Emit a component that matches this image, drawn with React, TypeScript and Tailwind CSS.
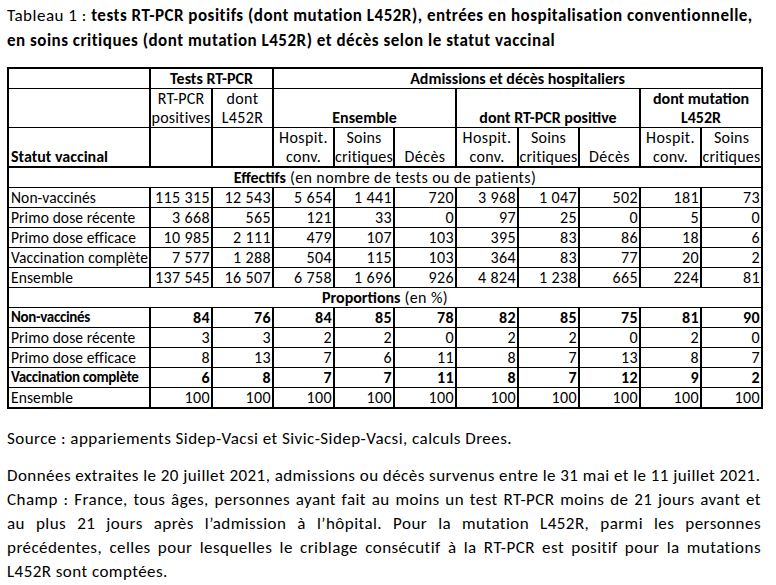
const effectifs: string[][] = [
  ['Non-vaccinés', '115 315', '12 543', '5 654', '1 441', '720', '3 968', '1 047', '502', '181', '73'],
  ['Primo dose récente', '3 668', '565', '121', '33', '0', '97', '25', '0', '5', '0'],
  ['Primo dose efficace', '10 985', '2 111', '479', '107', '103', '395', '83', '86', '18', '6'],
  ['Vaccination complète', '7 577', '1 288', '504', '115', '103', '364', '83', '77', '20', '2'],
  ['Ensemble', '137 545', '16 507', '6 758', '1 696', '926', '4 824', '1 238', '665', '224', '81'],
];

const proportions: { cells: string[]; bold?: boolean }[] = [
  { cells: ['Non-vaccinés', '84', '76', '84', '85', '78', '82', '85', '75', '81', '90'], bold: true },
  { cells: ['Primo dose récente', '3', '3', '2', '2', '0', '2', '2', '0', '2', '0'] },
  { cells: ['Primo dose efficace', '8', '13', '7', '6', '11', '8', '7', '13', '8', '7'] },
  { cells: ['Vaccination complète', '6', '8', '7', '7', '11', '8', '7', '12', '9', '2'], bold: true },
  { cells: ['Ensemble', '100', '100', '100', '100', '100', '100', '100', '100', '100', '100'] },
];

const widths = [142, 62, 61, 61, 60, 62, 62, 61, 61, 61, 61];

const cell = 'border-y border-x-2 border-black p-0 align-bottom';

const DataRow = ({ cells, bold }: { cells: string[]; bold?: boolean }) => (
  <tr className={bold ? 'font-bold' : ''}>
    {cells.map((c, i) =>
      i === 0 ? (
        <td
          key={i}
          className={`${cell} pl-[2px] text-left whitespace-nowrap ${
            bold ? 'text-[15px] tracking-[-0.3px]' : 'text-[15.5px] tracking-[0.1px]'
          }`}
        >
          {c}
        </td>
      ) : (
        <td key={i} className={`${cell} pr-[1px] text-right whitespace-nowrap`}>{c}</td>
      )
    )}
  </tr>
);

const TwoLine = ({ a, b }: { a: string; b: string }) => (
  <>
    {a}
    <br />
    {b}
  </>
);

export default function App() {
  const head = `${cell} font-bold tracking-[0px]`;
  return (
    <div className="min-h-[585px] w-[776px] bg-white text-black font-[family-name:Carlito,Calibri,Lato,sans-serif] pl-[7px] pt-[3px]">
      <h1 className="text-[17px] leading-[25px] tracking-[0.5px] whitespace-nowrap">
        Tableau 1 : <b>tests RT-PCR positifs (dont mutation L452R), entrées en hospitalisation conventionnelle,</b>
        <br />
        <b>en soins critiques (dont mutation L452R) et décès selon le statut vaccinal</b>
      </h1>

      <table className="mt-[14px] table-fixed border-collapse border-2 border-black text-[16px] leading-[19px] tracking-[0.4px] w-[754px]">
        <colgroup>
          {widths.map((w, i) => (
            <col key={i} style={{ width: w }} />
          ))}
        </colgroup>
        <thead>
          <tr className="text-center">
            <th className={cell}></th>
            <th colSpan={2} className={head}>Tests RT-PCR</th>
            <th colSpan={8} className={head}>Admissions et décès hospitaliers</th>
          </tr>
          <tr className="text-center">
            <th className={cell}></th>
            <td className={`${cell} whitespace-nowrap tracking-[0.2px]`}><TwoLine a="RT-PCR" b="positives" /></td>
            <td className={cell}><TwoLine a="dont" b="L452R" /></td>
            <th colSpan={3} className={head}>Ensemble</th>
            <th colSpan={3} className={head}>dont RT-PCR positive</th>
            <th colSpan={2} className={head}><TwoLine a="dont mutation" b="L452R" /></th>
          </tr>
          <tr className="text-center border-b-2 border-black">
            <th className={`${head} text-left pl-[2px]`}>
              <br />
              Statut vaccinal
            </th>
            <td className={cell}></td>
            <td className={cell}></td>
            <td className={cell}><TwoLine a="Hospit." b="conv." /></td>
            <td className={`${cell} tracking-[0.2px]`}><TwoLine a="Soins" b="critiques" /></td>
            <td className={cell}>Décès</td>
            <td className={cell}><TwoLine a="Hospit." b="conv." /></td>
            <td className={`${cell} tracking-[0.2px]`}><TwoLine a="Soins" b="critiques" /></td>
            <td className={cell}>Décès</td>
            <td className={cell}><TwoLine a="Hospit." b="conv." /></td>
            <td className={`${cell} tracking-[0.2px]`}><TwoLine a="Soins" b="critiques" /></td>
          </tr>
        </thead>
        <tbody>
          <tr className="text-center">
            <td colSpan={11} className={cell}>
              <b className="tracking-[0px]">Effectifs</b> (en nombre de tests ou de patients)
            </td>
          </tr>
          {effectifs.map((r) => (
            <DataRow key={r[0]} cells={r} />
          ))}
          <tr className="text-center">
            <td colSpan={11} className={cell}>
              <b className="tracking-[0px]">Proportions</b> (en %)
            </td>
          </tr>
          {proportions.map((r) => (
            <DataRow key={r.cells[0]} cells={r.cells} bold={r.bold} />
          ))}
        </tbody>
      </table>

      <div className="w-[754px] text-[17px] leading-[24px] tracking-[0.45px]">
        <p className="mt-[18px]">Source : appariements Sidep-Vacsi et Sivic-Sidep-Vacsi, calculs Drees.</p>
        <div className="mt-[13px] text-justify">
          <p className="whitespace-nowrap">
            Données extraites le 20 juillet 2021, admissions ou décès survenus entre le 31 mai et le 11 juillet 2021.
          </p>
          <p className="[text-align-last:justify]">
            Champ : France, tous âges, personnes ayant fait au moins un test RT-PCR moins de 21 jours avant et
          </p>
          <p className="[text-align-last:justify]">
            au plus 21 jours après l’admission à l’hôpital. Pour la mutation L452R, parmi les personnes
          </p>
          <p className="[text-align-last:justify]">
            précédentes, celles pour lesquelles le criblage consécutif à la RT-PCR est positif pour la mutations
          </p>
          <p>L452R sont comptées.</p>
        </div>
      </div>
    </div>
  );
}
